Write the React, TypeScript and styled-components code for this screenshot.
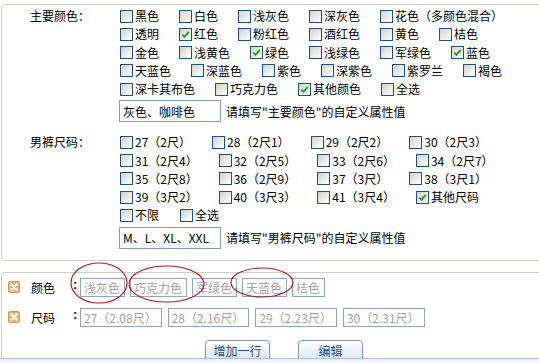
import React from "react";
import styled, { createGlobalStyle } from "styled-components";

const GlobalStyle = createGlobalStyle`
  html, body {
    margin: 0;
    padding: 0;
    background: #fff;
    overflow: hidden;
  }
  body {
    font-family: "Noto Sans CJK SC", "Noto Sans", sans-serif;
    font-size: 12px;
    color: #000;
    text-autospace: no-autospace;
    text-spacing-trim: space-all;
  }
`;

type Opt = { text: string; checked?: boolean };

const colorRows: Opt[][] = [
  [{ text: "黑色" }, { text: "白色" }, { text: "浅灰色" }, { text: "深灰色" }, { text: "花色（多颜色混合）" }],
  [{ text: "透明" }, { text: "红色", checked: true }, { text: "粉红色" }, { text: "酒红色" }, { text: "黄色" }, { text: "桔色" }],
  [{ text: "金色" }, { text: "浅黄色" }, { text: "绿色", checked: true }, { text: "浅绿色" }, { text: "军绿色" }, { text: "蓝色", checked: true }],
  [{ text: "天蓝色" }, { text: "深蓝色" }, { text: "紫色" }, { text: "深紫色" }, { text: "紫罗兰" }, { text: "褐色" }],
  [{ text: "深卡其布色" }, { text: "巧克力色" }, { text: "其他颜色", checked: true }, { text: "全选" }],
];

const sizeRows: Opt[][] = [
  [{ text: "27（2尺）" }, { text: "28（2尺1）" }, { text: "29（2尺2）" }, { text: "30（2尺3）" }],
  [{ text: "31（2尺4）" }, { text: "32（2尺5）" }, { text: "33（2尺6）" }, { text: "34（2尺7）" }],
  [{ text: "35（2尺8）" }, { text: "36（2尺9）" }, { text: "37（3尺）" }, { text: "38（3尺1）" }],
  [{ text: "39（3尺2）" }, { text: "40（3尺3）" }, { text: "41（3尺4）" }, { text: "其他尺码", checked: true }],
  [{ text: "不限" }, { text: "全选" }],
];

const Page = styled.div`
  position: relative;
  width: 539px;
  height: 363px;
  overflow: hidden;
  display: flex;
  flex-direction: column;
`;

const AttrPanel = styled.div`
  margin: 4px -20px 0 1px;
  border: 1px solid #d0cfc5;
  border-radius: 4px 0 0 4px;
  padding: 2px 0 11px;
`;

const Section = styled.div<{ $top?: number }>`
  display: grid;
  grid-template-columns: 118px 1fr;
  margin-top: ${(p) => p.$top ?? 0}px;
`;

const SectionLabel = styled.div`
  padding-left: 28px;
  line-height: 18.25px;
`;

const Row = styled.div<{ $gap: number }>`
  display: flex;
  align-items: center;
  gap: ${(p) => p.$gap}px;
  height: 18.25px;
  white-space: nowrap;
`;

const Option = styled.label`
  display: inline-flex;
  align-items: center;
  line-height: 18px;
`;

const Box = styled.span`
  width: 11px;
  height: 11px;
  border: 1px solid #1c5180;
  background: linear-gradient(135deg, #d2d2ca 0%, #ececE6 55%, #fff 100%);
  margin-right: 2px;
  display: inline-flex;
  align-items: center;
  justify-content: center;
  flex: none;
`;

const InputRow = styled.div`
  display: flex;
  align-items: center;
  margin: 2px 0 0 -1px;
  white-space: nowrap;
`;

const TextInput = styled.input`
  box-sizing: border-box;
  width: 102px;
  height: 22px;
  border: 1px solid #7f9db9;
  padding: 0 3px;
  font: inherit;
  color: #000;
  outline: none;
`;

const Hint = styled.span`
  margin-left: 5px;
`;

const ItemPanel = styled.div`
  margin: 11px -20px 0 1px;
  border: 1px solid #d0cfc5;
  border-bottom: none;
  border-radius: 4px 0 0 0;
  padding-top: 5px;
`;

const ItemRow = styled.div<{ $top?: number }>`
  display: flex;
  align-items: center;
  height: 19px;
  margin-top: ${(p) => p.$top ?? 0}px;
`;

const ItemLabel = styled.span`
  width: 42px;
  line-height: 19px;
`;

const Colon = styled.span`
  width: 7px;
  align-self: flex-start;
  font-family: "Liberation Sans", sans-serif;
  font-weight: bold;
  font-size: 13px;
  line-height: 12px;
  margin-top: 1px;
`;

const Values = styled.div<{ $gap: number }>`
  display: flex;
  gap: ${(p) => p.$gap}px;
`;

const ValueBox = styled.span`
  box-sizing: border-box;
  height: 19px;
  line-height: 17px;
  padding: 0 4px 0 3px;
  border: 1px solid #8ea5ba;
  color: #a3a3a3;
  white-space: nowrap;
`;

const ButtonBar = styled.div`
  display: flex;
  gap: 28px;
  height: 18px;
  overflow: hidden;
  margin: 13px 0 0 203px;
`;

const Button = styled.button`
  flex: none;
  width: 65px;
  height: 22px;
  padding: 0;
  border: 1px solid #8598ae;
  border-radius: 4px 4px 0 0;
  background: linear-gradient(#ffffff 0%, #f1f5fb 40%, #d8e5f3 100%);
  color: #1b4c8c;
  font: inherit;
  line-height: 18px;
`;

const BottomStrip = styled.div`
  flex: 1;
  border-top: 1px solid #a9bed6;
  background: linear-gradient(#e6eef8, #f6f9fd);
`;

const Marks = styled.svg`
  position: absolute;
  left: 0;
  top: 0;
  pointer-events: none;
`;

const Check = () => (
  <svg width="9" height="9" viewBox="0 0 9 9">
    <path d="M1.3 4.6 L3.5 6.8 L7.8 1.8" fill="none" stroke="#21a121" strokeWidth="1.9" />
  </svg>
);

const RemoveIcon = styled.svg`
  flex: none;
  margin: 0 11px 0 6px;
`;

const Remove = () => (
  <RemoveIcon width="12" height="12" viewBox="0 0 12 12">
    <rect x="0.5" y="0.5" width="11" height="11" rx="1.5" fill="#e1b872" stroke="#cf9f55" />
    <path d="M3.3 3.3 L8.7 8.7 M8.7 3.3 L3.3 8.7" stroke="#fff" strokeWidth="2" strokeLinecap="round" />
  </RemoveIcon>
);

const OptionRows = ({ rows, gap }: { rows: Opt[][]; gap: number }) => (
  <div>
    {rows.map((row, i) => (
      <Row key={i} $gap={gap}>
        {row.map((o) => (
          <Option key={o.text}>
            <Box>{o.checked && <Check />}</Box>
            {o.text}
          </Option>
        ))}
      </Row>
    ))}
  </div>
);

const App = () => (
  <Page>
    <GlobalStyle />
    <AttrPanel>
      <Section>
        <SectionLabel>主要颜色：</SectionLabel>
        <div>
          <OptionRows rows={colorRows} gap={20} />
          <InputRow>
            <TextInput defaultValue="灰色、咖啡色" />
            <Hint>请填写"主要颜色"的自定义属性值</Hint>
          </InputRow>
        </div>
      </Section>
      <Section $top={11}>
        <SectionLabel>男裤尺码：</SectionLabel>
        <div>
          <OptionRows rows={sizeRows} gap={21} />
          <InputRow>
            <TextInput defaultValue="M、L、XL、XXL" />
            <Hint>请填写"男裤尺码"的自定义属性值</Hint>
          </InputRow>
        </div>
      </Section>
    </AttrPanel>

    <ItemPanel>
      <ItemRow>
        <Remove />
        <ItemLabel>颜色</ItemLabel>
        <Colon>:</Colon>
        <Values $gap={5}>
          {["浅灰色", "巧克力色", "军绿色", "天蓝色", "桔色"].map((v) => (
            <ValueBox key={v}>{v}</ValueBox>
          ))}
        </Values>
      </ItemRow>
      <ItemRow $top={11}>
        <Remove />
        <ItemLabel>尺码</ItemLabel>
        <Colon>:</Colon>
        <Values $gap={6}>
          {["27（2.08尺）", "28（2.16尺）", "29（2.23尺）", "30（2.31尺）"].map((v) => (
            <ValueBox key={v}>{v}</ValueBox>
          ))}
        </Values>
      </ItemRow>
      <ButtonBar>
        <Button>增加一行</Button>
        <Button>编辑</Button>
      </ButtonBar>
    </ItemPanel>
    <BottomStrip />

    <Marks width="539" height="363" viewBox="0 0 539 363">
      <g fill="none" stroke="#a61d2c" strokeWidth="1.2">
        <ellipse cx="99" cy="283" rx="28" ry="20" />
        <ellipse cx="166.5" cy="284" rx="37.5" ry="18" />
        <ellipse cx="262" cy="282.5" rx="31" ry="14.5" />
      </g>
    </Marks>
  </Page>
);

export default App;
